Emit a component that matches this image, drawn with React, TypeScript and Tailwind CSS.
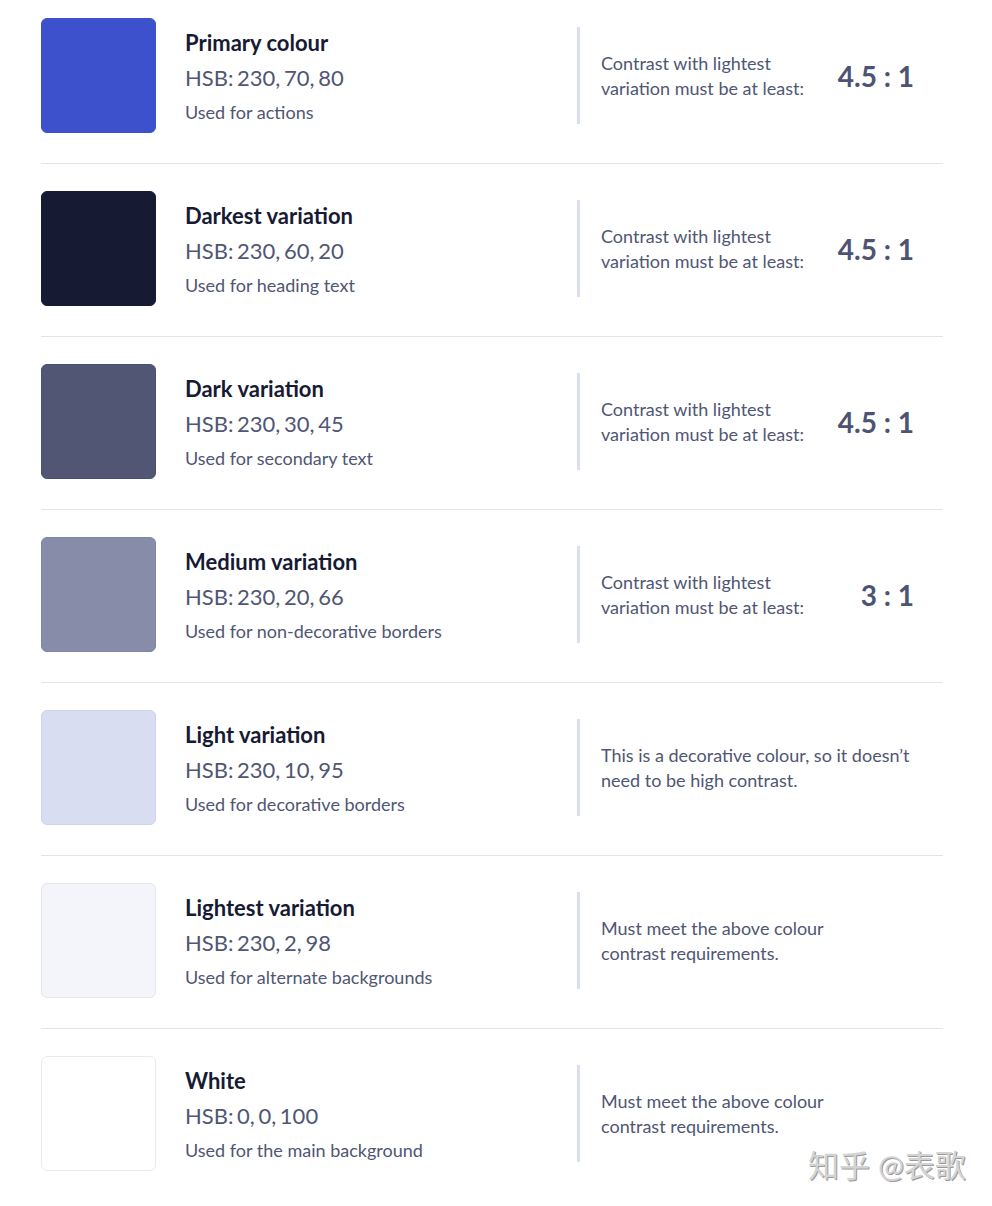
import React from "react";

type Row = {
  color: string;
  border: string;
  title: string;
  hsb: string;
  use: string;
  ratio?: string;
  note?: [string, string];
};

const rows: Row[] = [
  { color: "bg-[#3d51cc]", border: "border-[#3d51cc]", title: "Primary colour", hsb: "HSB: 230, 70, 80", use: "Used for actions", ratio: "4.5 : 1" },
  { color: "bg-[#171a33]", border: "border-[#171a33]", title: "Darkest variation", hsb: "HSB: 230, 60, 20", use: "Used for heading text", ratio: "4.5 : 1" },
  { color: "bg-[#505673]", border: "border-[#4a5070]", title: "Dark variation", hsb: "HSB: 230, 30, 45", use: "Used for secondary text", ratio: "4.5 : 1" },
  { color: "bg-[#878ca8]", border: "border-[#80869f]", title: "Medium variation", hsb: "HSB: 230, 20, 66", use: "Used for non-decorative borders", ratio: "3 : 1" },
  { color: "bg-[#d9ddf1]", border: "border-[#cfd4ea]", title: "Light variation", hsb: "HSB: 230, 10, 95", use: "Used for decorative borders", note: ["This is a decorative colour, so it doesn\u2019t", "need to be high contrast."] },
  { color: "bg-[#f4f5fa]", border: "border-[#e6e7ee]", title: "Lightest variation", hsb: "HSB: 230, 2, 98", use: "Used for alternate backgrounds", note: ["Must meet the above colour", "contrast requirements."] },
  { color: "bg-white", border: "border-[#ebebef]", title: "White", hsb: "HSB: 0, 0, 100", use: "Used for the main background", note: ["Must meet the above colour", "contrast requirements."] },
];

export default function App() {
  return (
    <div
      className="relative w-[992px] h-[1206px] bg-white overflow-hidden"
      style={{ fontFamily: "Lato, 'Noto Sans CJK SC', sans-serif" }}
    >
      <div className="mx-[41px] w-[902px]">
        {rows.map((r, i) => (
          <div
            key={i}
            className={`flex items-center ${i === 0 ? "pt-[18px]" : "pt-[27px]"} pb-[30px] ${i < rows.length - 1 ? "border-b border-[#e3e4e8]" : ""}`}
          >
            <div className={`w-[115px] h-[115px] shrink-0 rounded-[6px] border ${r.color} ${r.border}`} />
            <div className="w-[421px] shrink-0 pl-[29px] pt-[3px] flex flex-col">
              <div className="text-[22px] leading-[32px] font-bold text-[#171a33]">{r.title}</div>
              <div className="text-[22px] leading-[38px] text-[#505673] [word-spacing:-2px]">{r.hsb}</div>
              <div className="text-[18px] leading-[30px] text-[#505673]">{r.use}</div>
            </div>
            <div className="flex-1 flex items-center border-l-[3px] border-[#d9def0] h-[97px] pl-[21px] pr-[29px] justify-between">
              {r.ratio ? (
                <>
                  <div className="text-[18px] leading-[25px] text-[#505673] whitespace-nowrap">
                    Contrast with lightest
                    <br />
                    variation must be at least:
                  </div>
                  <div className="text-[28px] font-bold text-[#4d5372] whitespace-nowrap">{r.ratio}</div>
                </>
              ) : (
                <div className="text-[18px] leading-[25px] text-[#505673] whitespace-nowrap">
                  {r.note![0]}
                  <br />
                  {r.note![1]}
                </div>
              )}
            </div>
          </div>
        ))}
      </div>
      <div
        className="absolute left-[808px] top-[1145px] text-[31px] leading-[40px] text-[#d4d4d4] whitespace-nowrap"
        style={{ textShadow: "1px 1px 0 #9a9a9a" }}
      >
        知乎 @表歌
      </div>
    </div>
  );
}
